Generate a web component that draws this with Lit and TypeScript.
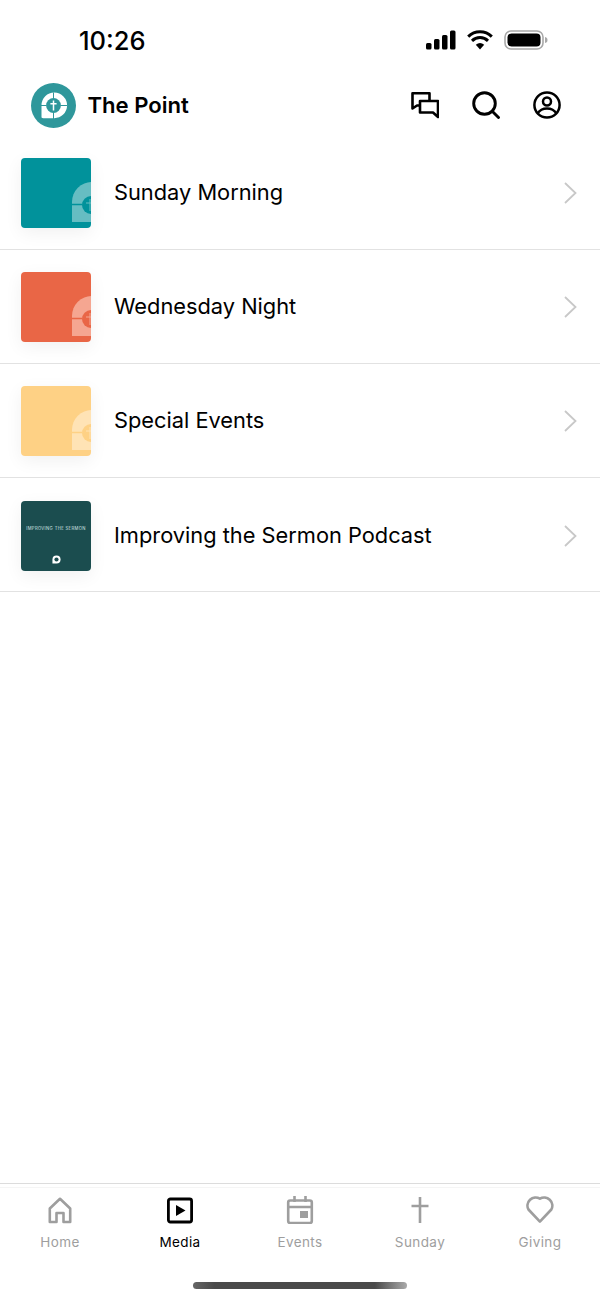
import { LitElement, html, css, svg } from "lit";
import { customElement } from "lit/decorators.js";

const thumbMark = (fg: string, bg: string) => svg`
  <svg class="mark" viewBox="0 0 70 70">
    <path d="M51 64 V44 A20 20 0 0 1 71 24 H80 V64 Z" fill="${fg}"/>
    <path d="M51 46.5 H61" stroke="${bg}" stroke-width="1.4" fill="none"/>
    <circle cx="70" cy="47" r="9" fill="${bg}"/>
    <path d="M69 41 V53 M65 45 H70" stroke="${fg}" stroke-width="1"/>
  </svg>`;

const logo = svg`
  <svg class="logo" viewBox="0 0 45 45">
    <circle cx="22.5" cy="22.5" r="22.5" fill="#2f979b"/>
    <path d="M10.5 34.5 V22.5 A12.8 12.8 0 1 1 23 35.2 H13 A2.6 2.6 0 0 1 10.5 34.5 Z" fill="#fff"/>
    <circle cx="22.5" cy="22.5" r="7.4" fill="#2f979b"/>
    <path d="M10 22.5 H15.5 M29.5 22.5 H36 M22.5 9.5 V15.5 M22.5 29.5 V36" stroke="#2f979b" stroke-width="1"/>
    <path d="M22.5 17.5 V27.5 M19.4 20.8 H25.6" stroke="#fff" stroke-width="1.5"/>
  </svg>`;

const rows = [
  { label: "Sunday Morning", bg: "#01929b", fg: "#66bdc2" },
  { label: "Wednesday Night", bg: "#e96646", fg: "#f5a691" },
  { label: "Special Events", bg: "#fed185", fg: "#ffe3b5" },
  { label: "Improving the Sermon Podcast", podcast: true },
];

const tabs = [
  {
    label: "Home",
    icon: svg`<path d="M3.8 26 V12.5 L14 2.8 L24.2 12.5 V26 H17.5 V17 H10.5 V26 Z" fill="none" stroke="currentColor" stroke-width="2.6" stroke-linejoin="round"/>`,
  },
  {
    label: "Media",
    active: true,
    icon: svg`<rect x="2.4" y="3" width="23.2" height="23" rx="2" fill="none" stroke="currentColor" stroke-width="2.8"/><path d="M10 9 L19.5 14.5 L10 20 Z" fill="currentColor"/>`,
  },
  {
    label: "Events",
    icon: svg`<rect x="2.2" y="4.5" width="23.6" height="22.5" rx="2" fill="none" stroke="currentColor" stroke-width="2.6"/><path d="M2 11 H26 M8.5 0 V6 M19.5 0 V6" stroke="currentColor" stroke-width="2.6" fill="none"/><rect x="14" y="15" width="8" height="7" fill="currentColor"/>`,
  },
  {
    label: "Sunday",
    icon: svg`<path d="M14 1 V27 M5.5 10 H22.5" stroke="currentColor" stroke-width="2.6" fill="none"/>`,
  },
  {
    label: "Giving",
    icon: svg`<path d="M14 26 L3.6 15 A7.4 7.4 0 0 1 14 5.2 A7.4 7.4 0 0 1 24.4 15 Z" transform="translate(-1.5 -3) scale(1.1)" fill="none" stroke="currentColor" stroke-width="2.4" stroke-linejoin="round"/>`,
  },
];

@customElement("app-root")
export class AppRoot extends LitElement {
  static styles = css`
    :host {
      display: block;
      width: 600px;
      font-family: Inter, "Liberation Sans", sans-serif;
      color: #000;
      background: #fff;
    }
    .page {
      display: flex;
      flex-direction: column;
      height: 1300px;
      overflow: hidden;
    }
    .status {
      height: 75px;
      flex: none;
      display: flex;
      align-items: flex-start;
      justify-content: space-between;
      padding: 26px 52px 0 79px;
      box-sizing: border-box;
    }
    .time {
      font-size: 25.5px;
      line-height: 30px;
      font-weight: 500;
    }
    .sys {
      display: flex;
      align-items: center;
      gap: 11px;
      margin-top: 4px;
    }
    .header {
      height: 60.7px;
      flex: none;
      display: flex;
      align-items: center;
      padding: 0 39px 0 31px;
    }
    .logo {
      width: 45px;
      height: 45px;
      flex: none;
    }
    .title {
      margin-left: 11.5px;
      flex: 1;
      font-size: 22.1px;
      font-weight: 600;
      padding-bottom: 1px;
    }
    .actions {
      display: flex;
      align-items: center;
      gap: 33px;
    }
    .actions svg {
      display: block;
      width: 28px;
      height: 28px;
    }
    .list {
      flex: 1;
    }
    .row {
      height: 114.2px;
      box-sizing: border-box;
      border-bottom: 1px solid #e2e2e2;
      display: flex;
      align-items: center;
      padding: 1.6px 23px 0 21px;
    }
    .thumb {
      position: relative;
      width: 70px;
      height: 70px;
      flex: none;
      border-radius: 4px;
      overflow: hidden;
    }
    .thumbwrap {
      flex: none;
      border-radius: 4px;
      box-shadow: 0 5px 18px rgba(0, 0, 0, 0.06);
    }
    .mark {
      position: absolute;
      inset: 0;
      width: 70px;
      height: 70px;
    }
    .podcast {
      background: #1b4d4f;
      color: #d8e6e6;
      display: flex;
      flex-direction: column;
      align-items: center;
    }
    .podcast span {
      margin-top: 25px;
      font-size: 4.2px;
      line-height: 6px;
      letter-spacing: 0.36px;
      white-space: nowrap;
    }
    .podcast svg {
      margin-top: 23px;
      width: 9px;
      height: 9px;
    }
    .label {
      flex: 1;
      margin-left: 23px;
      font-size: 21.8px;
      font-weight: 400;
      padding-bottom: 2px;
    }
    .chev {
      width: 13px;
      height: 22px;
      flex: none;
    }
    .tabbar {
      flex: none;
      height: 117px;
      box-sizing: border-box;
      border-top: 1px solid #dcdcdc;
      display: flex;
      flex-direction: column;
      align-items: center;
    }
    .tabs {
      display: flex;
      width: 100%;
      margin-top: 3px;
      border-top: 1px solid #f5f5f5;
      padding-top: 8px;
    }
    .tab {
      width: 120px;
      display: flex;
      flex-direction: column;
      align-items: center;
      color: #9e9e9e;
      font-size: 13.5px;
      line-height: 18px;
      letter-spacing: 0.4px;
    }
    .tab svg {
      display: block;
      width: 28px;
      height: 28px;
      margin-bottom: 9px;
    }
    .tab.active {
      color: #000;
    }
    .indicator {
      margin-top: 31px;
      width: 214px;
      height: 7px;
      border-radius: 4px;
      background: linear-gradient(90deg, #666, #4a4a4a 10%, #4a4a4a 85%, #aaa);
    }
  `;

  render() {
    return html`
      <div class="page">
        <div class="status">
          <div class="time">10:26</div>
          <div class="sys">
            <svg width="30" height="20" viewBox="0 0 30 20">
              <rect x="0" y="13" width="5.5" height="6.5" rx="1.5" />
              <rect x="8" y="9" width="5.5" height="10.5" rx="1.5" />
              <rect x="16" y="5" width="5.5" height="14.5" rx="1.5" />
              <rect x="24" y="0.5" width="5.5" height="19" rx="1.5" />
            </svg>
            <svg width="26" height="20" viewBox="0 0 26 20">
              <path d="M13 19.5 L8.8 14.8 A6.5 6.5 0 0 1 17.2 14.8 Z" />
              <path d="M5 10.8 A11.5 11.5 0 0 1 21 10.8" fill="none" stroke="#000" stroke-width="3" />
              <path d="M1.2 6.6 A17 17 0 0 1 24.8 6.6" fill="none" stroke="#000" stroke-width="3" />
            </svg>
            <svg width="44" height="20" viewBox="0 0 44 20">
              <rect x="1" y="1" width="38" height="18" rx="6" fill="#fff" stroke="#a8a8a8" stroke-width="1.6" />
              <rect x="3.5" y="3.5" width="33" height="13" rx="4" />
              <path d="M41 7 C43 7.5 43.5 8.5 43.5 10 C43.5 11.5 43 12.5 41 13 Z" fill="#a8a8a8" />
            </svg>
          </div>
        </div>
        <div class="header">
          ${logo}
          <div class="title">The Point</div>
          <div class="actions">
            <svg viewBox="0 0 28 28" fill="none" stroke="#000" stroke-width="2.6" stroke-linejoin="round">
              <path d="M18.5 10 V2.2 H1.5 V17.5 L6 14.5 H9" />
              <path d="M9 10 H27 V26 L22 21.5 H9 Z" />
            </svg>
            <svg viewBox="0 0 28 28" fill="none" stroke="#000" stroke-width="2.9" stroke-linecap="round">
              <circle cx="12.5" cy="12.5" r="10.8" />
              <path d="M20.5 20.5 L26.5 26.5" />
            </svg>
            <svg viewBox="0 0 28 28" fill="none" stroke="#000" stroke-width="2.5">
              <circle cx="14" cy="14" r="12.6" />
              <circle cx="14" cy="10.5" r="4" />
              <path d="M4.5 22.5 C7 18.5 10 17.5 14 17.5 C18 17.5 21 18.5 23.5 22.5" />
            </svg>
          </div>
        </div>
        <div class="list">
          ${rows.map(
            (r) => html`
              <div class="row">
                <div class="thumbwrap">
                  ${r.podcast
                    ? html`<div class="thumb podcast">
                        <span>IMPROVING THE SERMON</span>
                        <svg viewBox="0 0 10 10">
                          <path d="M0.5 9.5 V5 A4.5 4.5 0 1 1 5 9.5 Z" fill="#fff" />
                          <circle cx="5" cy="5" r="2.3" fill="#1b4d4f" />
                        </svg>
                      </div>`
                    : html`<div class="thumb" style="background:${r.bg}">${thumbMark(r.fg!, r.bg!)}</div>`}
                </div>
                <div class="label">${r.label}</div>
                <svg class="chev" viewBox="0 0 13 22" fill="none" stroke="#c8c8c8" stroke-width="1.8">
                  <path d="M1 1 L11.5 11 L1 21" />
                </svg>
              </div>
            `
          )}
        </div>
        <div class="tabbar">
          <div class="tabs">
            ${tabs.map(
              (t) => html`
                <div class="tab ${t.active ? "active" : ""}">
                  <svg viewBox="0 0 28 28">${t.icon}</svg>
                  <div>${t.label}</div>
                </div>
              `
            )}
          </div>
          <div class="indicator"></div>
        </div>
      </div>
    `;
  }
}
